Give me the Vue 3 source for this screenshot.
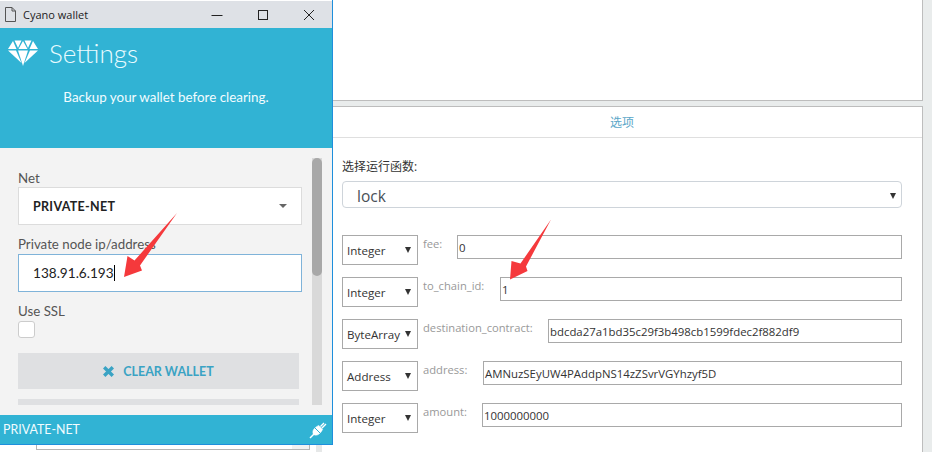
<script setup>
const rows = [
  { type: 'Integer', label: 'fee:', labelWidth: 39, value: '0' },
  { type: 'Integer', label: 'to_chain_id:', labelWidth: 82, value: '1' },
  { type: 'ByteArray', label: 'destination_contract:', labelWidth: 130, value: 'bdcda27a1bd35c29f3b498cb1599fdec2f882df9' },
  { type: 'Address', label: 'address:', labelWidth: 65, value: 'AMNuzSEyUW4PAddpNS14zZSvrVGYhzyf5D' },
  { type: 'Integer', label: 'amount:', labelWidth: 64, value: '1000000000' }
]
</script>

<template>
  <div class="page">
    <div class="left-col">
      <div class="under-box"><span class="under-thumb"></span></div>
      <div class="under-strip"></div>
    </div>

    <div class="right-col">
      <section class="top-panel"></section>
      <section class="options">
        <header class="options-head">选项</header>
        <div class="options-body">
          <div class="fn-label">选择运行函数:</div>
          <div class="fn-select">
            <span>lock</span>
            <i class="tri"></i>
          </div>
          <div class="param-list">
            <div v-for="row in rows" :key="row.label" class="param">
              <div class="type-select">
                <span>{{ row.type }}</span>
                <i class="tri"></i>
              </div>
              <label class="param-label" :style="{ width: row.labelWidth + 'px' }">{{ row.label }}</label>
              <div class="param-input">{{ row.value }}</div>
            </div>
          </div>
        </div>
      </section>
    </div>
    <div class="edge"></div>

    <div class="window">
      <div class="titlebar">
        <svg class="doc" width="11" height="15" viewBox="0 0 11 15" fill="none" stroke="#555" stroke-width="1">
          <path d="M.5.5H7L10.5 4V14.5H.5ZM7 .5V4H10.5" />
        </svg>
        <span class="title">Cyano wallet</span>
        <div class="controls">
          <svg width="12" height="12" viewBox="0 0 12 12" stroke="#222" fill="none"><path d="M.5 6.5H11.5" /></svg>
          <svg width="12" height="12" viewBox="0 0 12 12" stroke="#222" fill="none"><rect x="1.5" y="1.5" width="9" height="9" /></svg>
          <svg width="12" height="12" viewBox="0 0 12 12" stroke="#222" fill="none"><path d="M1 1L11 11M11 1L1 11" /></svg>
        </div>
      </div>

      <div class="hero">
        <div class="hero-title">
          <svg class="gem" width="30" height="26" viewBox="0 0 30 26" fill="#fff">
            <path d="M0 9L5 1L8.5 9Z" />
            <path d="M6.5 .5H13.5L10 8Z" />
            <path d="M10.5 9L15 1L19.5 9Z" />
            <path d="M16.5 .5H23.5L20 8Z" />
            <path d="M21.5 9L25 1L30 9Z" />
            <path d="M0 10.5H8L13.5 23Z" />
            <path d="M10 10.5H20L15 26Z" />
            <path d="M22 10.5H30L16.5 23Z" />
          </svg>
          <h1>Settings</h1>
        </div>
        <p>Backup your wallet before clearing.</p>
      </div>

      <div class="body">
        <div class="scroll">
          <div class="form">
            <div class="lbl first">Net</div>
            <div class="net-select">
              <b>PRIVATE-NET</b>
              <i class="tri small"></i>
            </div>
            <div class="lbl">Private node ip/address</div>
            <div class="ip-input">138.91.6.193<span class="caret"></span></div>
            <div class="lbl">Use SSL</div>
            <div class="check"></div>
            <div class="clear-btn">
              <svg width="11" height="11" viewBox="0 0 11 11" stroke="#3aa3c4" stroke-width="3.4"><path d="M1.2 1.2L9.8 9.8M9.8 1.2L1.2 9.8" /></svg>
              <span>CLEAR WALLET</span>
            </div>
            <div class="next-btn"></div>
          </div>
          <div class="scrollbar"><span></span></div>
        </div>
      </div>

      <footer class="status">
        <span>PRIVATE-NET</span>
        <svg width="18" height="18" viewBox="0 0 18 18" fill="#fff" stroke="#fff">
          <path d="M1 17L5 13" stroke-width="1.4" />
          <path d="M4.2 9.2C5.5 6.8 8 5 9.8 4.4L13.6 8.2C13 10 11.2 12.5 8.8 13.8C7.2 14.4 5.4 14.2 4.6 13.4C3.8 12.6 3.6 10.8 4.2 9.2Z" stroke-width=".5" />
          <path d="M5.5 6.5L11.5 12.5" stroke="#31b3d4" stroke-width="1" />
          <path d="M11.5 5.5L15 2M13 7L17 3" stroke-width="1.4" />
        </svg>
      </footer>
    </div>

    <svg class="arrows" width="932" height="452" viewBox="0 0 932 452">
      <path d="M124 277L127.5 256L134.5 260.5L177 213L140 265.5L142 270.5Z" fill="#f5393c" />
      <path d="M510 279.5L511.5 261L520.5 263.5L551 219.5L526 266.5L527.5 271Z" fill="#f5393c" />
    </svg>
  </div>
</template>

<style>
html, body { margin: 0; padding: 0; background: #e9ecec; }
</style>

<style scoped>
.page {
  position: relative;
  display: flex;
  width: 932px;
  height: 452px;
  overflow: hidden;
  background: #e9ecec;
  font-family: "Open Sans", "Noto Sans CJK SC", sans-serif;
}
.arrows { position: absolute; left: 0; top: 0; pointer-events: none; }
.left-col {
  width: 322px;
  flex: none;
  background: #fff;
  display: flex;
  align-items: flex-end;
  padding-left: 36px;
  box-sizing: border-box;
}
.under-box {
  width: 274px;
  height: 20px;
  margin-bottom: 2px;
  box-sizing: border-box;
  border: 1px solid #b5b5b5;
  background: #fff;
  display: flex;
  justify-content: flex-end;
}
.under-thumb { width: 17px; background: #f1f1f1; }
.under-strip {
  width: 6px;
  margin-left: 6px;
  height: 100%;
  background: #e6e8e8;
}
.right-col {
  width: 601px;
  flex: none;
  display: flex;
  flex-direction: column;
}
.top-panel {
  height: 100px;
  flex: none;
  background: #fff;
  border-bottom: 1px solid #bdbdbd;
  border-right: 1px solid #bdbdbd;
  box-sizing: content-box;
}
.options {
  margin-top: 5px;
  flex: 1;
  background: #fff;
  border-top: 1px solid #bdbdbd;
  border-right: 1px solid #bdbdbd;
}
.options-head {
  height: 30px;
  line-height: 32px;
  text-align: center;
  font-size: 12px;
  color: #5aa6c8;
  border-bottom: 1px solid #dfdfdf;
}
.options-body { padding: 21px 20px 0; }
.fn-label {
  height: 16px;
  line-height: 16px;
  font-size: 12px;
  color: #333;
  margin-bottom: 6px;
}
.fn-select {
  height: 27px;
  box-sizing: border-box;
  border: 1px solid #ced4da;
  border-radius: 4px;
  padding: 2px 5px 0 14px;
  display: flex;
  align-items: center;
  justify-content: space-between;
  font-size: 15.5px;
  color: #495057;
}
.tri {
  display: block;
  width: 0;
  height: 0;
  border-left: 3.5px solid transparent;
  border-right: 3.5px solid transparent;
  border-top: 6px solid #333;
}
.tri.small {
  border-left-width: 4px;
  border-right-width: 4px;
  border-top-width: 4px;
  border-top-color: #666;
}
.param-list {
  margin-top: 27px;
  display: flex;
  flex-direction: column;
  gap: 12px;
}
.param { display: flex; align-items: flex-start; height: 30px; }
.type-select {
  width: 76px;
  height: 30px;
  flex: none;
  box-sizing: border-box;
  border: 1px solid #a9a9a9;
  padding: 0 6px 0 4px;
  display: flex;
  align-items: center;
  justify-content: space-between;
  font-size: 11.6px;
  color: #333;
}
.param-label {
  flex: none;
  padding-left: 5px;
  box-sizing: border-box;
  line-height: 14px;
  padding-top: 2px;
  font-size: 11.2px;
  color: #999;
}
.param-input {
  flex: 1;
  min-width: 0;
  height: 24px;
  box-sizing: border-box;
  line-height: 24px;
  border: 1px solid #a9a9a9;
  padding-left: 1px;
  font-size: 11.4px;
  color: #333;
}
.edge { flex: 1; }

.window {
  position: absolute;
  left: 0;
  top: 0;
  width: 333px;
  height: 445px;
  box-sizing: border-box;
  padding-top: 1px;
  background: #fff;
  display: flex;
  flex-direction: column;
  border-right: 1px solid #1e8fdc;
  border-bottom: 1px solid #1e8fdc;
}
.titlebar {
  height: 27px;
  flex: none;
  background: #dee1e6;
  display: flex;
  align-items: center;
  padding-left: 5px;
}
.title {
  margin-left: 7px;
  font-size: 11px;
  color: #222;
}
.controls {
  margin-left: auto;
  display: flex;
  gap: 34px;
  padding-right: 17px;
}
.hero {
  height: 120px;
  flex: none;
  box-sizing: border-box;
  background: #31b3d4;
  color: #fff;
  padding: 12px 0 0 8px;
  font-family: Lato, sans-serif;
}
.hero-title { display: flex; align-items: center; gap: 11px; height: 26px; }
.hero-title h1 {
  margin: 0;
  font-size: 26px;
  font-weight: 300;
  line-height: 26px;
  color: #e9fbff;
}
.hero p {
  margin: 23px 8px 0 0;
  text-align: center;
  font-size: 13.4px;
  line-height: 16px;
  color: #f2fcff;
}
.body {
  flex: 1;
  background: #f3f3f3;
  padding-bottom: 10px;
  min-height: 0;
  font-family: Lato, sans-serif;
}
.scroll { display: flex; height: 100%; overflow: hidden; }
.form { width: 284px; margin-left: 18px; flex: none; }
.lbl {
  height: 16px;
  line-height: 16px;
  font-size: 13.3px;
  color: #555;
  margin: 11px 0 2px;
}
.lbl.first { margin: 22px 0 1px; }
.net-select {
  height: 38px;
  box-sizing: border-box;
  background: #fff;
  border: 1px solid #dcdcdc;
  padding: 0 14px;
  display: flex;
  align-items: center;
  justify-content: space-between;
  font-size: 12.5px;
  letter-spacing: .3px;
  color: #222;
}
.ip-input {
  height: 38px;
  box-sizing: border-box;
  background: #fff;
  border: 1px solid #7fb3d9;
  padding-left: 14px;
  display: flex;
  align-items: center;
  font-size: 13.6px;
  color: #222;
}
.caret { width: 1px; height: 16px; background: #000; margin-left: 0; }
.check {
  width: 17px;
  height: 17px;
  box-sizing: border-box;
  background: #fff;
  border: 1px solid #ccc;
  border-radius: 3px;
}
.clear-btn {
  width: 281px;
  height: 36px;
  margin-top: 15px;
  background: #dfe0e2;
  display: flex;
  align-items: center;
  justify-content: center;
  gap: 9px;
  font-size: 12.5px;
  font-weight: 700;
  color: #3aa3c4;
}
.next-btn { width: 281px; height: 36px; margin-top: 10px; background: #dfe0e2; }
.scrollbar {
  width: 10px;
  margin: 10px 0 0 10px;
  background: #d9d9d9;
  flex: none;
}
.scrollbar span {
  display: block;
  height: 118px;
  background: #a8a8a8;
  border-radius: 5px;
}
.status {
  height: 29px;
  flex: none;
  background: #31b3d4;
  display: flex;
  align-items: center;
  justify-content: space-between;
  padding: 0 5px 0 3px;
  font-family: Lato, sans-serif;
  font-size: 12.4px;
  color: #f2fcff;
}
</style>
